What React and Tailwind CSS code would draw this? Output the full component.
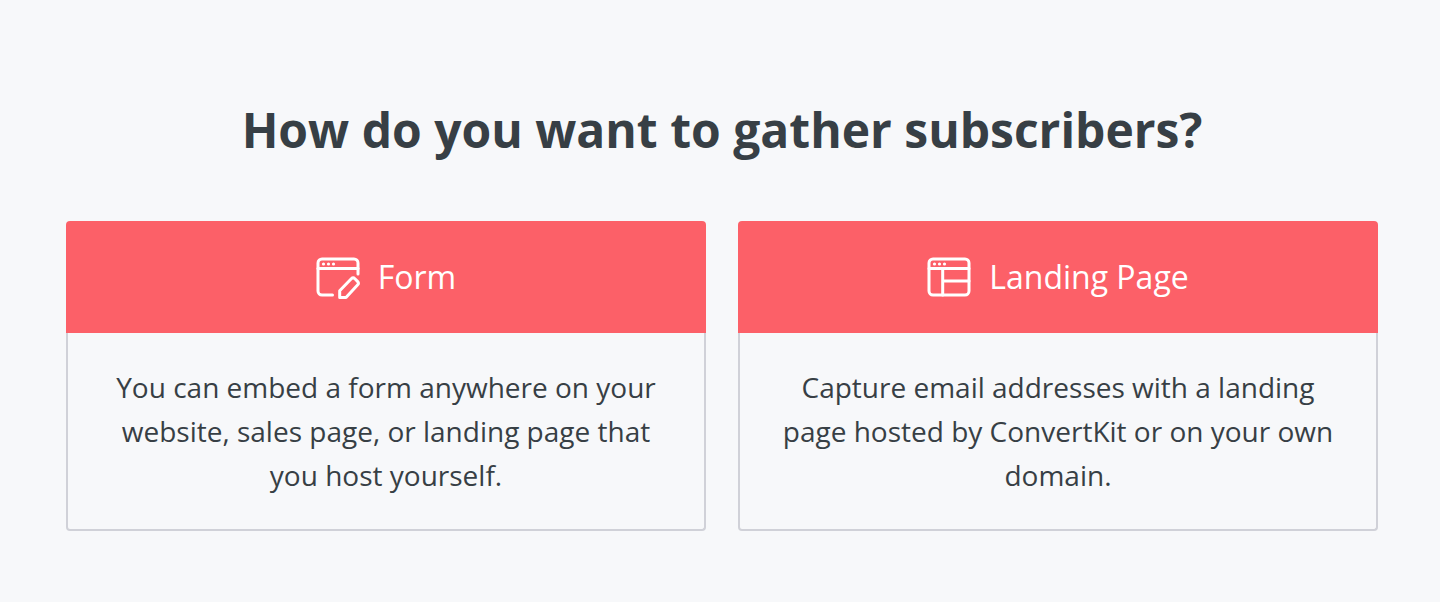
import React from 'react';

// Browser window with a pencil over the bottom right corner
const FormIcon = () => (
  <svg
    className="h-11 w-11"
    viewBox="0 0 44 44"
    fill="none"
    stroke="currentColor"
    strokeWidth="3"
    strokeLinecap="round"
    strokeLinejoin="round"
    aria-hidden="true"
  >
    <path d="M16.5 40H6a4 4 0 0 1-4-4V8a4 4 0 0 1 4-4h32a4 4 0 0 1 4 4v11" />
    <path d="M2 13.5h40" />
    <path d="M23.7 42.4v-6.6l11.6-12q1.8-1.8 3.6 0l2.6 2.6q1.8 1.8 0 3.6L30 42.4z" />
    <g fill="currentColor" stroke="none">
      <circle cx="7.5" cy="9" r="1.6" />
      <circle cx="12.5" cy="9" r="1.6" />
      <circle cx="17.5" cy="9" r="1.6" />
    </g>
  </svg>
);

// Browser window split into a sidebar and two rows
const LandingPageIcon = () => (
  <svg
    className="h-11 w-11"
    viewBox="0 0 44 44"
    fill="none"
    stroke="currentColor"
    strokeWidth="3"
    strokeLinecap="round"
    strokeLinejoin="round"
    aria-hidden="true"
  >
    <rect x="2" y="4" width="40" height="36" rx="4" />
    <path d="M2 13.5h40M15.7 13.5V40M15.7 26H42" />
    <g fill="currentColor" stroke="none">
      <circle cx="7.5" cy="9" r="1.6" />
      <circle cx="12.5" cy="9" r="1.6" />
      <circle cx="17.5" cy="9" r="1.6" />
    </g>
  </svg>
);

const options = [
  {
    title: 'Form',
    icon: FormIcon,
    description:
      'You can embed a form anywhere on your website, sales page, or landing page that you host yourself.',
  },
  {
    title: 'Landing Page',
    icon: LandingPageIcon,
    description:
      'Capture email addresses with a landing page hosted by ConvertKit or on your own domain.',
  },
];

const OptionCard = ({ title, icon: Icon, description }) => (
  <div className="flex flex-col">
    <button
      type="button"
      className="flex h-28 w-full items-center justify-center gap-[18px] rounded-t bg-[#fc6068] text-[32px] text-white"
    >
      <Icon />
      {title}
    </button>
    <p className="grow rounded-b border-2 border-t-0 border-[#d0d1d8] px-8 pt-8 pb-8 text-center text-[28px] leading-[44px]">
      {description}
    </p>
  </div>
);

const App = () => {
  return (
    <main className="min-h-screen bg-[#f7f8fa] py-24 pr-[62px] pl-[66px] font-['Open_Sans',sans-serif] text-[#373f45]">
      <h1 className="mb-[57px] text-center text-5xl leading-[68px] font-bold">
        How do you want to gather subscribers?
      </h1>

      {/* Choices */}
      <div className="grid grid-cols-1 gap-8 md:grid-cols-2">
        {options.map((option) => (
          <OptionCard key={option.title} {...option} />
        ))}
      </div>
    </main>
  );
};

export default App;
